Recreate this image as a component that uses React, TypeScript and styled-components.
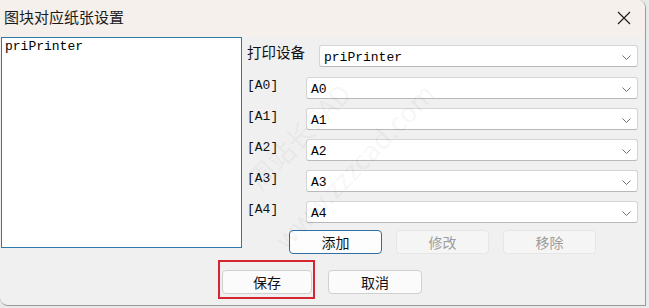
import React from "react";
import styled, { createGlobalStyle } from "styled-components";

const GlobalStyle = createGlobalStyle`
  html, body {
    margin: 0;
    padding: 0;
    background: #e9e9e9;
    font-family: "Noto Sans CJK SC", "Noto Sans", sans-serif;
  }
`;

const Window = styled.div`
  width: 646px;
  height: 306px;
  background: #f0f0f0;
  border-right: 1px solid #9a9a9a;
  border-bottom: 1px solid #9a9a9a;
  border-radius: 0 8px 0 8px;
  overflow: hidden;
  display: flex;
  flex-direction: column;
  position: relative;
  box-sizing: border-box;
`;

const TitleBar = styled.div`
  height: 37px;
  background: #f6f0ec;
  display: flex;
  align-items: center;
  justify-content: space-between;
  padding: 0 14px 0 4px;
  flex-shrink: 0;
`;

const Title = styled.span`
  font-size: 15px;
  color: #1a1a1a;
  line-height: 1;
  margin-top: -4px;
`;

const CloseButton = styled.button`
  border: none;
  background: transparent;
  padding: 0;
  width: 14px;
  height: 14px;
  display: flex;
  margin-top: -1px;
`;

const Body = styled.div`
  display: grid;
  grid-template-columns: 241px 1fr;
  column-gap: 5px;
  padding-left: 1px;
  padding-right: 7px;
`;

const ListBox = styled.div`
  height: 211px;
  background: #fff;
  border: 1px solid #2d7aa8;
  box-sizing: border-box;
  padding: 1px 3px;
  font-family: "Liberation Mono", monospace;
  font-size: 13px;
  color: #000;
`;

const Form = styled.div`
  display: flex;
  flex-direction: column;
  padding-top: 8px;
`;

const Row = styled.div<{ $first?: boolean }>`
  display: flex;
  align-items: flex-start;
  height: 22px;
  margin-bottom: ${(p) => (p.$first ? "10px" : "9px")};
`;

const Label = styled.span<{ $width: number; $mono?: boolean }>`
  width: ${(p) => p.$width}px;
  flex-shrink: 0;
  font-family: ${(p) =>
    p.$mono ? `"Liberation Mono", monospace` : `"Noto Sans CJK SC", sans-serif`};
  font-size: ${(p) => (p.$mono ? "13px" : "14.5px")};
  line-height: 17px;
  margin-top: ${(p) => (p.$mono ? "0px" : "-2px")};
  color: #111;
`;

const Combo = styled.div`
  flex: 1;
  height: 22px;
  background: #fff;
  border: 1px solid #d4d4d4;
  border-bottom-color: #b8b8b8;
  border-radius: 3px;
  box-sizing: border-box;
  display: flex;
  align-items: center;
  justify-content: space-between;
  padding: 2px 6px 0 4px;
  font-family: "Liberation Mono", monospace;
  font-size: 13px;
  color: #000;
`;

const ActionRow = styled.div`
  display: flex;
  gap: 14px;
  padding-left: 42px;
  margin-top: -2px;
`;

const Button = styled.button<{ $focused?: boolean; $width?: number }>`
  width: ${(p) => p.$width ?? 93}px;
  height: 24px;
  box-sizing: border-box;
  border-radius: 4px;
  font-family: "Noto Sans CJK SC", sans-serif;
  font-size: 14px;
  line-height: 1;
  padding: 0;
  background: ${(p) => (p.$focused ? "#fdfdfd" : "#fbfbfb")};
  border: 1px solid ${(p) => (p.$focused ? "#2f6fa6" : "#d0d0d0")};
  color: #111;
  &:disabled {
    background: #f5f5f5;
    border-color: #e6e6e6;
    color: #9d9d9d;
  }
`;

const Footer = styled.div`
  display: flex;
  align-items: flex-start;
  padding-left: 218px;
  margin-top: 6px;
  gap: 13px;
`;

const Highlight = styled.div`
  border: 2px solid #d32630;
  padding: 7px 1px 3px 2px;
`;

const FooterButtonWrap = styled.div`
  padding-top: 9px;
`;

const Watermark = styled.span<{ $x: number; $y: number }>`
  position: absolute;
  left: ${(p) => p.$x}px;
  top: ${(p) => p.$y}px;
  transform: rotate(-46deg);
  transform-origin: left bottom;
  font-family: "Noto Sans CJK SC", sans-serif;
  font-size: 27px;
  line-height: 1;
  white-space: nowrap;
  color: rgba(0, 0, 0, 0.055);
  pointer-events: none;
`;

const Chevron = () => (
  <svg width="9" height="5" viewBox="0 0 9 5">
    <path d="M0.5 0.5 L4.5 4.5 L8.5 0.5" fill="none" stroke="#707070" strokeWidth="1" />
  </svg>
);

const devices = ["A0", "A1", "A2", "A3", "A4"];

const App: React.FC = () => {
  return (
    <>
      <GlobalStyle />
      <Window>
        <TitleBar>
          <Title>图块对应纸张设置</Title>
          <CloseButton>
            <svg width="14" height="14" viewBox="0 0 14 14">
              <path d="M1 1 L13 13 M13 1 L1 13" stroke="#1a1a1a" strokeWidth="1.1" />
            </svg>
          </CloseButton>
        </TitleBar>
        <Body>
          <ListBox>priPrinter</ListBox>
          <Form>
            <Row $first>
              <Label $width={72}>打印设备</Label>
              <Combo>
                <span>priPrinter</span>
                <Chevron />
              </Combo>
            </Row>
            {devices.map((d) => (
              <Row key={d}>
                <Label $width={59} $mono>
                  [{d}]
                </Label>
                <Combo>
                  <span>{d}</span>
                  <Chevron />
                </Combo>
              </Row>
            ))}
            <ActionRow>
              <Button $focused>添加</Button>
              <Button disabled>修改</Button>
              <Button disabled>移除</Button>
            </ActionRow>
          </Form>
        </Body>
        <Footer>
          <Highlight>
            <Button $width={90}>保存</Button>
          </Highlight>
          <FooterButtonWrap>
            <Button $width={94}>取消</Button>
          </FooterButtonWrap>
        </Footer>
        <Watermark $x={262} $y={166}>周站长CAD</Watermark>
        <Watermark $x={288} $y={226}>www.zzzcad.com</Watermark>
      </Window>
    </>
  );
};

export default App;
